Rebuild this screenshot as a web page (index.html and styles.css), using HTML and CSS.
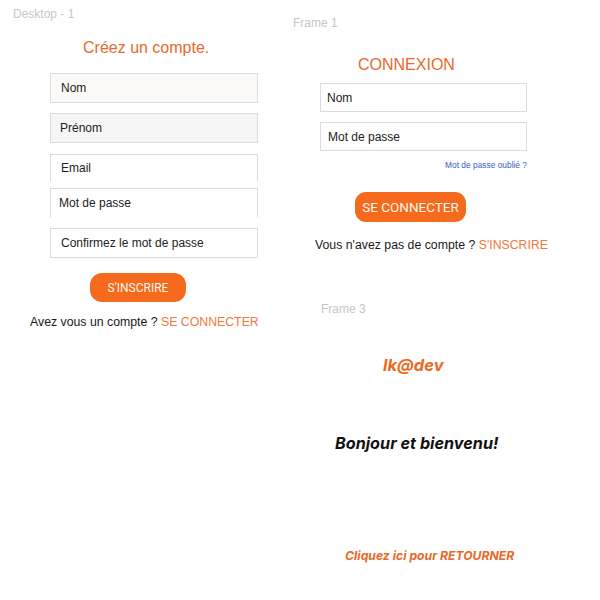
FILE: index.html
```html
<!DOCTYPE html>
<html lang="fr">
<head>
<meta charset="utf-8">
<title>Canvas</title>
<link rel="stylesheet" href="styles.css">
</head>
<body>
<div class="canvas">
  <section class="frame frame-desk">
    <div class="frame-label">Desktop - 1</div>
    <h1 class="title title-desk">Créez un compte.</h1>
    <div class="fields fields-desk">
      <div class="field field-warm">Nom</div>
      <div class="field field-gray">Prénom</div>
      <div class="field field-open field-email">Email</div>
      <div class="field field-open field-pass">Mot de passe</div>
      <div class="field">Confirmez le mot de passe</div>
    </div>
    <div class="btn btn-desk">S'INSCRIRE</div>
    <p class="switch switch-desk">Avez vous un compte ? <span class="accent">SE CONNECTER</span></p>
  </section>

  <section class="frame frame-login">
    <div class="frame-label">Frame 1</div>
    <h1 class="title title-login">CONNEXION</h1>
    <div class="fields fields-login">
      <div class="field">Nom</div>
      <div class="field">Mot de passe</div>
    </div>
    <div class="forgot">Mot de passe oublié ?</div>
    <div class="btn btn-login">SE CONNECTER</div>
    <p class="switch switch-login">Vous n'avez pas de compte ? <span class="accent">S'INSCRIRE</span></p>
  </section>

  <section class="frame frame-home">
    <div class="frame-label">Frame 3</div>
    <div class="brand">lk@dev</div>
    <div class="welcome">Bonjour et bienvenu!</div>
    <div class="back">Cliquez ici pour RETOURNER</div>
  </section>
</div>
</body>
</html>
```

FILE: styles.css
```css
* { box-sizing: border-box; }
html, body { margin: 0; padding: 0; background: #fff; }
body { font-family: "Liberation Sans", Arial, sans-serif; color: #1f1f1f; }
.canvas { position: relative; width: 600px; height: 600px; overflow: hidden; }

.frame { position: absolute; top: 0; }
.frame-desk { left: 0; width: 290px; padding: 8px 0 0 13px; }
.frame-login { left: 290px; width: 310px; padding: 17px 0 0 3px; }
.frame-home { left: 300px; top: 290px; width: 300px; padding: 13px 0 0 21px; }

.frame-label { font-size: 12px; line-height: 13px; color: #c6c6c6; }

.title { margin: 0; font-weight: normal; color: #e8692d; font-size: 16px; line-height: 20px; }
.title-desk { margin: 17px 0 0 70px; }
.title-login { margin: 25px 0 0 65px; }

.fields { display: flex; flex-direction: column; }
.field {
  display: flex; align-items: center;
  width: 208px; height: 30px;
  border: 1px solid #dcdcdc;
  padding-left: 10px;
  font-size: 12px; color: #222;
  background: #fff;
  margin-bottom: 10px;
}
.field-warm { background: #fdf9f6; }
.field-gray { background: #f7f6f6; padding-left: 9px; margin-bottom: 11px; }
.field-open { border-bottom-color: transparent; }
.field-email { height: 28px; margin-bottom: 6px; }
.field-pass { padding-left: 8px; }
.fields-desk { margin: 15px 0 0 37px; }
.fields-desk .field:last-child { margin-bottom: 0; }
.fields-login { margin: 8px 0 0 27px; }
.fields-login .field { width: 207px; height: 29px; padding-left: 6px; }
.fields-login .field:last-child { margin-bottom: 0; padding-left: 7px; }

.btn {
  display: flex; align-items: center; justify-content: center;
  background: #f56a1c; color: #fff4ec;
  border-radius: 12px;
  font-family: Roboto, "Liberation Sans", sans-serif;
}
.btn-desk { width: 96px; height: 29px; margin: 15px 0 0 77px; font-size: 12px; }
.btn-login { width: 111px; height: 30px; margin: 22px 0 0 62px; font-size: 13.5px; border-radius: 11px; }

.forgot { margin: 10px 0 0 140px; width: 94px; text-align: right; font-size: 8.4px; color: #3b5cc0; line-height: 9px; }

.switch { margin: 0; font-size: 12.3px; line-height: 14px; color: #1a1a1a; white-space: nowrap; }
.switch-desk { margin: 13px 0 0 17px; }
.switch-login { margin: 16px 0 0 22px; }
.accent { color: #ee7a3c; }

.brand, .welcome, .back {
  font-family: Inter, "Open Sans", sans-serif;
  font-style: italic; font-weight: 700;
}
.brand { margin: 40px 0 0 62px; font-size: 16.5px; line-height: 19px; color: #ea6a22; }
.welcome { margin: 59px 0 0 14px; font-size: 16.2px; line-height: 19px; color: #111; }
.back { margin: 96px 0 0 24px; font-size: 12.2px; line-height: 14px; color: #e8692a; }
```
